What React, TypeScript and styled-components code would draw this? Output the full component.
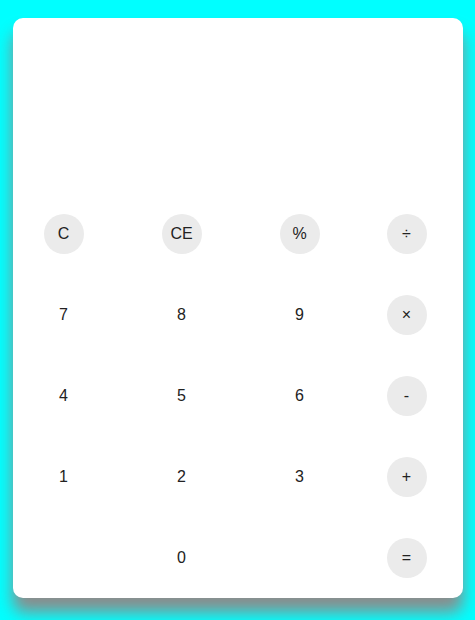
import React from "react";
import styled, { createGlobalStyle } from "styled-components";

const Global = createGlobalStyle`
  html, body {
    margin: 0;
    padding: 0;
    background: #00ffff;
    font-family: "Liberation Sans", Arial, sans-serif;
  }
  body {
    min-height: 620px;
  }
`;

const Page = styled.div`
  min-height: 620px;
  box-sizing: border-box;
  padding-top: 18px;
  overflow: hidden;
`;

const Card = styled.div`
  width: 450px;
  height: 580px;
  margin: 0 auto;
  background: #ffffff;
  border-radius: 10px;
  box-shadow: 0 14px 16px rgb(140, 140, 140);
  display: flex;
  flex-direction: column;
  box-sizing: border-box;
  padding: 0 16px 0 11px;
`;

const Display = styled.div`
  height: 175px;
  flex: none;
`;

const Keypad = styled.div`
  display: grid;
  grid-template-columns: 80px 80px 80px 80px;
  column-gap: 38px;
  grid-auto-rows: 81px;
  align-items: center;
  justify-items: center;
  & > :nth-child(4n) {
    margin-left: -22px;
  }
`;

const Key = styled.button<{ $round?: boolean }>`
  width: 40px;
  height: 40px;
  border: none;
  border-radius: 50%;
  padding: 0;
  background: ${(p) => (p.$round ? "#ebebeb" : "transparent")};
  color: #222222;
  font-family: "Liberation Sans", Arial, sans-serif;
  font-size: 16px;
  display: flex;
  align-items: center;
  justify-content: center;
  cursor: pointer;
`;

const Empty = styled.span`
  width: 40px;
  height: 40px;
`;

type K = { label: string; round?: boolean } | null;

const keys: K[] = [
  { label: "C", round: true },
  { label: "CE", round: true },
  { label: "%", round: true },
  { label: "÷", round: true },
  { label: "7" },
  { label: "8" },
  { label: "9" },
  { label: "×", round: true },
  { label: "4" },
  { label: "5" },
  { label: "6" },
  { label: "-", round: true },
  { label: "1" },
  { label: "2" },
  { label: "3" },
  { label: "+", round: true },
  null,
  { label: "0" },
  null,
  { label: "=", round: true },
];

export default function App() {
  return (
    <>
      <Global />
      <Page>
        <Card>
          <Display />
          <Keypad>
            {keys.map((k, i) =>
              k ? (
                <Key key={i} $round={k.round}>
                  {k.label}
                </Key>
              ) : (
                <Empty key={i} />
              )
            )}
          </Keypad>
        </Card>
      </Page>
    </>
  );
}
